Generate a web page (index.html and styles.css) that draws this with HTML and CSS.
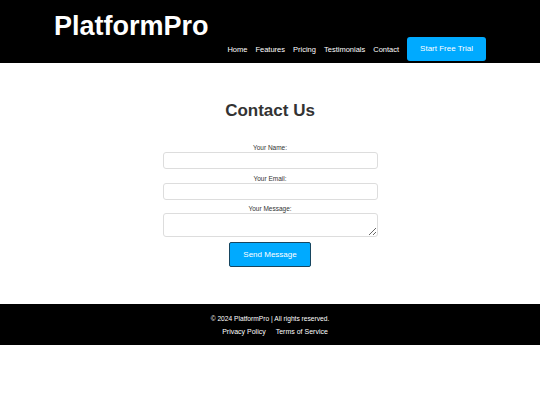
FILE: index.html
```html
<!DOCTYPE html>
<html lang="en">
<head>
<meta charset="utf-8">
<title>PlatformPro - Contact</title>
<link rel="stylesheet" href="styles.css">
</head>
<body>
<header class="site-header">
  <div class="header-inner">
    <div class="logo">PlatformPro</div>
    <nav class="nav">
      <a href="#" class="nav-link">Home</a>
      <a href="#" class="nav-link">Features</a>
      <a href="#" class="nav-link">Pricing</a>
      <a href="#" class="nav-link">Testimonials</a>
      <a href="#" class="nav-link">Contact</a>
      <a href="#" class="cta">Start Free Trial</a>
    </nav>
  </div>
</header>
<main class="main">
  <h2 class="title">Contact Us</h2>
  <form class="form">
    <label class="label" for="name">Your Name:</label>
    <input class="field" type="text" id="name">
    <label class="label" for="email">Your Email:</label>
    <input class="field field-last" type="email" id="email">
    <label class="label" for="msg">Your Message:</label>
    <textarea class="field area" id="msg"></textarea>
    <button type="button" class="send">Send Message</button>
  </form>
</main>
<footer class="footer">
  <p class="copy">© 2024 PlatformPro | All rights reserved.</p>
  <p class="links"><a href="#" class="foot-link">Privacy Policy</a><a href="#" class="foot-link">Terms of Service</a></p>
</footer>
</body>
</html>
```
FILE: styles.css
```css
* { box-sizing: border-box; }
html, body { margin: 0; padding: 0; background: #fff; }
body { font-family: "Liberation Sans", Arial, sans-serif; color: #333; }

.site-header { background: #000; padding: 10px 0 2px; }
.header-inner {
  width: 432px;
  margin: 0 auto;
  display: flex;
  justify-content: space-between;
  align-items: flex-start;
}
.logo {
  color: #fff;
  font-weight: bold;
  font-size: 27px;
  line-height: 32px;
}
.nav {
  margin-top: 27px;
  display: flex;
  align-items: center;
  gap: 8px;
}
.nav-link {
  color: #fff;
  text-decoration: none;
  font-size: 7.5px;
  line-height: 9px;
}
.cta {
  display: block;
  background: #00aaff;
  color: #fff;
  text-decoration: none;
  font-size: 8px;
  line-height: 24px;
  height: 24px;
  padding: 0 13px;
  border-radius: 3px;
}

.main { padding: 38px 0 37px; }
.title {
  margin: 0 0 23px;
  text-align: center;
  font-size: 17px;
  line-height: 20px;
  font-weight: bold;
  color: #333;
}
.form {
  width: 215px;
  margin: 0 auto;
  display: flex;
  flex-direction: column;
  align-items: center;
}
.label {
  display: block;
  font-size: 6.5px;
  line-height: 8px;
  color: #333;
  text-align: center;
}
.field {
  display: block;
  width: 215px;
  height: 17px;
  margin: 0 0 6px;
  border: 1px solid #ddd;
  border-radius: 3px;
  background: #fff;
  font-family: inherit;
  font-size: 7px;
  padding: 2px 4px;
}
.field-last { margin-bottom: 5px; }
.area { height: 24px; margin-bottom: 5px; }
.send {
  width: 82px;
  height: 25px;
  background: #00aaff;
  color: #fff;
  border: 1px solid #17455f;
  border-radius: 2px;
  font-family: inherit;
  font-size: 8px;
  padding: 0;
}

.footer {
  background: #000;
  color: #fff;
  text-align: center;
  padding: 10px 0 9px;
  font-size: 6.67px;
  line-height: 9px;
}
.copy { margin: 0 0 4px; }
.links { margin: 0; font-size: 7px; }
.foot-link { color: #fff; text-decoration: none; margin-left: 10px; }
```
